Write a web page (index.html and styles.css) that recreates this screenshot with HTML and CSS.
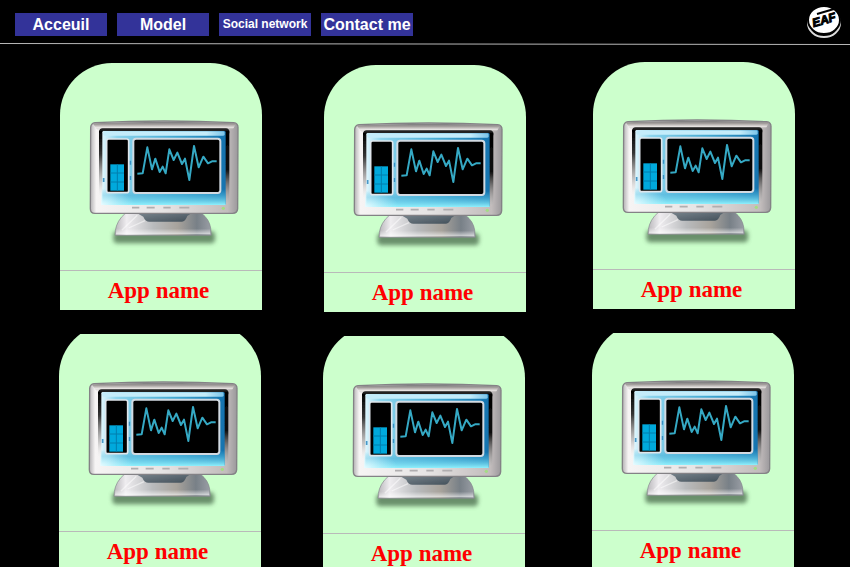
FILE: index.html
```
<!DOCTYPE html>
<html lang="en">
<head>
<meta charset="utf-8">
<meta name="viewport" content="width=device-width, initial-scale=1">
<title>Apps</title>
<link rel="stylesheet" href="styles.css">
</head>
<body>
<svg class="sprite" aria-hidden="true">
  <defs>
    <linearGradient id="case" x1="0" y1="0" x2="1" y2="0">
      <stop offset="0" stop-color="#b4b2b4"/><stop offset=".04" stop-color="#f6f4f4"/>
      <stop offset=".5" stop-color="#e6e4e4"/><stop offset=".93" stop-color="#c2bcbc"/><stop offset="1" stop-color="#9a989b"/>
    </linearGradient>
    <linearGradient id="caseTop" x1="0" y1="0" x2="0" y2="1">
      <stop offset="0" stop-color="#77777a"/><stop offset=".35" stop-color="#a5a09e"/><stop offset=".7" stop-color="#e6e2e0" stop-opacity=".9"/><stop offset="1" stop-color="#b0acab" stop-opacity="0"/>
    </linearGradient>
    <linearGradient id="rim" x1="0" y1="0" x2="0" y2="1">
      <stop offset="0" stop-color="#000"/><stop offset=".35" stop-color="#333"/><stop offset=".75" stop-color="#aaa" stop-opacity=".6"/><stop offset="1" stop-color="#eee" stop-opacity="0"/>
    </linearGradient>
    <linearGradient id="rimRight" x1="0" y1="0" x2="0" y2="1">
      <stop offset="0" stop-color="#000"/><stop offset=".55" stop-color="#111"/><stop offset="1" stop-color="#bbb" stop-opacity=".3"/>
    </linearGradient>
    <linearGradient id="glass" x1="0" y1="0" x2="1" y2="0">
      <stop offset="0" stop-color="#dff6fd"/><stop offset=".12" stop-color="#8fd6ee"/><stop offset=".6" stop-color="#42a9d2"/><stop offset="1" stop-color="#1372ae"/>
    </linearGradient>
    <linearGradient id="gloss" x1="0" y1="0" x2="1" y2="0">
      <stop offset="0" stop-color="#c4ecfa"/><stop offset=".85" stop-color="#c4ecfa"/><stop offset="1" stop-color="#7cc4e8"/>
    </linearGradient>
    <linearGradient id="glow" x1="0" y1="0" x2="0" y2="1">
      <stop offset="0" stop-color="#4fb6dc" stop-opacity="0"/><stop offset=".4" stop-color="#4fb6dc" stop-opacity=".6"/><stop offset="1" stop-color="#8ff0fc"/>
    </linearGradient>
    <radialGradient id="corner" cx="0" cy="1" r="1">
      <stop offset="0" stop-color="#e8fbff"/><stop offset="1" stop-color="#bff2fc" stop-opacity="0"/>
    </radialGradient>
    <linearGradient id="base" x1="0" y1="0" x2="1" y2="0">
      <stop offset="0" stop-color="#b8b6ba"/><stop offset=".12" stop-color="#efedf0"/><stop offset=".4" stop-color="#b9bbbd"/>
      <stop offset=".65" stop-color="#a8a39c"/><stop offset=".85" stop-color="#788087"/><stop offset="1" stop-color="#9b9fa6"/>
    </linearGradient>
    <linearGradient id="baseShine" x1="0" y1="0" x2="0" y2="1">
      <stop offset="0" stop-color="#fff" stop-opacity="0"/><stop offset="1" stop-color="#fff" stop-opacity=".65"/>
    </linearGradient>
    <linearGradient id="neck" x1="0" y1="0" x2="1" y2="1">
      <stop offset="0" stop-color="#77838b"/><stop offset="1" stop-color="#43505a"/>
    </linearGradient>
    <filter id="blur" x="-20%" y="-60%" width="140%" height="220%"><feGaussianBlur stdDeviation="6"/></filter>
    <filter id="soft" x="-5%" y="-5%" width="110%" height="110%"><feGaussianBlur stdDeviation="1.7"/></filter>
  </defs>
  <symbol id="monitor" viewBox="108 189 468 396">
    <rect x="190" y="532" width="305" height="36" rx="12" fill="#496b4b" opacity=".75" filter="url(#blur)"/>
    <g filter="url(#soft)">
      <path d="M226 478Q200 500 196 530L195 544H484L482 522Q478 496 455 478Z" fill="url(#base)" stroke="#85888c" stroke-width="2"/>
      <path d="M200 524H480L481 541H198Z" fill="url(#baseShine)"/>
      <path d="M216 528L262 484M236 522L285 500" stroke="#fff" stroke-width="4" opacity=".5"/>
      <path d="M262 478H424L412 486Q406 503 396 503H298Q286 503 280 488Z" fill="url(#neck)"/>
      <path d="M135 206Q343 196 551 206Q564 208 564 220L563 464Q562 478 548 478H135Q121 478 121 464L122 220Q123 208 135 206Z" fill="url(#case)" stroke="#848286" stroke-width="4"/>
      <path d="M128 208Q343 198 558 208L548 228H142Z" fill="url(#caseTop)"/>
      <path d="M147 236Q147 223 158 223H528Q538 223 538 234V238H147Z" fill="#222"/>
      <rect x="147" y="230" width="12" height="200" fill="url(#rim)"/>
      <rect x="524" y="230" width="14" height="216" fill="url(#rimRight)"/>
      <rect x="157" y="231" width="370" height="222" rx="4" fill="url(#glass)"/>
      <rect x="160" y="232" width="364" height="13" rx="4" fill="url(#gloss)"/>
      <rect x="157" y="405" width="370" height="48" fill="url(#glow)"/>
      <rect x="153" y="400" width="100" height="53" fill="url(#corner)"/>
      <path d="M241 320V332M241 366V378M161 372V384" stroke="#2382bd" stroke-width="5" opacity=".8"/>
      <rect x="170" y="255" width="66" height="161" rx="6" fill="#000" stroke="#dfe6ec" stroke-width="5"/>
      <rect x="250" y="254" width="261" height="163" rx="8" fill="#000" stroke="#d2dae2" stroke-width="6"/>
      <rect x="181" y="331" width="41" height="79" fill="#00a9dc"/>
      <path d="M202 331V410M181 357H222M181 384H222" stroke="#007eae" stroke-width="3" fill="none"/>
      <path d="M262 359L278 358L292 280L306 346L316 314L329 354L338 338L347 358L358 286L371 318L382 296L396 330L405 314L418 378L432 276L446 340L460 308L474 328L486 322H500" fill="none" stroke="#36a9c4" stroke-width="6" stroke-linejoin="round"/>
      <path d="M246 461H268M290 461H314M340 461H362M388 461H418" stroke="#b0aeb0" stroke-width="5"/>
      <circle cx="520" cy="463" r="5" fill="#a4dc84"/>
    </g>
  </symbol>
</svg>

<header class="bar">
  <nav class="menu">
    <a class="tab" href="#home">Acceuil</a>
    <a class="tab" href="#model">Model</a>
    <a class="tab small" href="#social">Social network</a>
    <a class="tab" href="#contact">Contact me</a>
  </nav>
  <svg class="logo" viewBox="0 0 36 38" role="img" aria-label="EAF">
    <ellipse cx="18" cy="20" rx="16" ry="14" fill="#000" stroke="#ddd" stroke-width="2"/>
    <ellipse cx="18" cy="17" rx="16" ry="14" fill="#fff" stroke="#000" stroke-width="2"/>
    <path d="M11 11L28 6" stroke="#000" stroke-width="2"/>
    <text x="18" y="21" text-anchor="middle" transform="rotate(-16 18 17)" class="logo-text">EAF</text>
  </svg>
</header>
<svg class="rule" viewBox="0 0 850 2" preserveAspectRatio="none" aria-hidden="true">
  <path d="M0 .5L850 1.5" stroke="#b8b8b8" stroke-width="1"/>
</svg>

<main>
  <section class="row">
    <article class="app"><div class="picture"><svg class="monitor"><use href="#monitor"/></svg></div><h2>App name</h2></article>
    <article class="app"><div class="picture"><svg class="monitor"><use href="#monitor"/></svg></div><h2>App name</h2></article>
    <article class="app"><div class="picture"><svg class="monitor"><use href="#monitor"/></svg></div><h2>App name</h2></article>
  </section>
  <section class="row cropped">
    <article class="app"><div class="picture"><svg class="monitor"><use href="#monitor"/></svg></div><h2>App name</h2></article>
    <article class="app"><div class="picture"><svg class="monitor"><use href="#monitor"/></svg></div><h2>App name</h2></article>
    <article class="app"><div class="picture"><svg class="monitor"><use href="#monitor"/></svg></div><h2>App name</h2></article>
  </section>
</main>
</body>
</html>
```
FILE: styles.css
```
* { box-sizing: border-box; }

body {
  margin: 0;
  height: 100vh;
  overflow: hidden;
  background: #000;
  font-family: "Liberation Sans", Arial, sans-serif;
}

.sprite { position: absolute; width: 0; height: 0; }

.bar {
  display: flex;
  justify-content: space-between;
  align-items: flex-start;
  padding: 3px 8px 0 15px;
  height: 43px;
}

.menu { display: flex; gap: 10px; padding-top: 10px; }

.tab {
  width: 92px;
  background: #333399;
  color: #fff;
  font-size: 16px;
  font-weight: bold;
  line-height: 23px;
  text-align: center;
  text-decoration: none;
  white-space: nowrap;
}

.tab.small { font-size: 12px; }

.logo { width: 36px; height: 38px; }

.logo-text {
  font: italic bold 12px "Liberation Sans", Arial, sans-serif;
  fill: #000;
  stroke: #000;
  stroke-width: 1px;
}

.rule { display: block; width: 100%; height: 2px; }

.row {
  display: grid;
  grid-template-columns: 264fr 269fr 202fr;
  align-items: start;
  padding: 17px 55px 0 60px;
}

.app {
  width: 202px;
  background: #ccffcc;
  border-radius: 52px 52px 0 0;
  margin-top: 1px;
}

.app:nth-child(2) { margin-top: 3px; }
.app:nth-child(3) { margin-top: 0; }

.picture {
  height: 207px;
  padding: 54px 0 0 26px;
}

.monitor { display: block; width: 156px; height: 132px; }

.app h2 {
  margin: 0;
  border-top: 1px solid #b9b9b9;
  color: #f00;
  font: bold 23px/39px "Liberation Serif", "Times New Roman", serif;
  text-align: center;
  padding-right: 5px;
}

.cropped { padding: 11px 56px 0 59px; }
.cropped .app { clip-path: inset(10px 0 0 0); }
```
